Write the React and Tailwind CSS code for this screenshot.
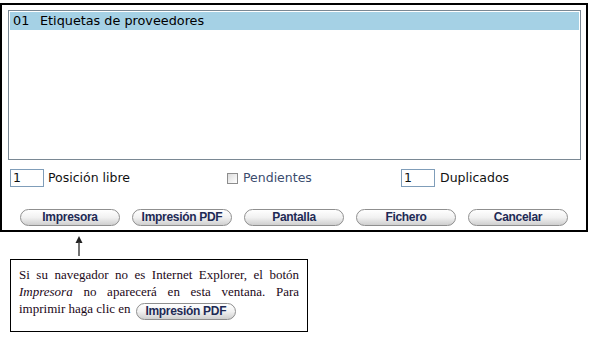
import React from "react";

const buttons = ["Impresora", "Impresión PDF", "Pantalla", "Fichero", "Cancelar"];

function PillButton({ label, className = "" }) {
  return (
    <button
      className={
        "h-[17px] w-[100px] rounded-full border border-[#8f8f8f] bg-gradient-to-b from-white via-[#f1f1f1] to-[#cfcfcf] text-[12px] font-bold leading-[15px] tracking-tight text-[#1e2a55] " +
        className
      }
      style={{ fontFamily: '"Liberation Sans", Arial, sans-serif' }}
    >
      {label}
    </button>
  );
}

export default function App() {
  return (
    <div className="h-[342px] w-[594px] bg-white" style={{ fontFamily: '"DejaVu Sans", Verdana, sans-serif' }}>
      {/* main panel */}
      <div className="ml-0 mt-[3px] h-[229px] w-[588px] border-2 border-black pl-[6px] pr-[5px] pt-[5px]">
        {/* list */}
        <div className="h-[150px] w-[573px] border border-[#7a8894] p-px">
          <div className="flex h-[18px] items-center bg-[#a5d1e5] pl-[3px] text-[12.8px] text-black">
            <span className="w-[27px]">01</span>
            <span>Etiquetas de proveedores</span>
          </div>
        </div>

        {/* options row */}
        <div className="mt-[9px] flex h-[18px] items-center pl-[2px] text-[12.5px] text-[#111]">
          <div className="flex w-[217px] items-center">
            <input
              readOnly
              value="1"
              className="h-[18px] w-[34px] border border-[#7f9db9] px-[2px] text-[12.5px] outline-none"
            />
            <span className="ml-[4px]">Posición libre</span>
          </div>
          <div className="flex w-[174px] items-center">
            <span className="h-[11px] w-[11px] border border-[#8d8d8d] bg-gradient-to-br from-[#dcdcdc] to-white"></span>
            <span className="ml-[5px] text-[#3a4c6e]">Pendientes</span>
          </div>
          <div className="flex items-center">
            <input
              readOnly
              value="1"
              className="h-[18px] w-[34px] border border-[#7f9db9] px-[2px] text-[12.5px] outline-none"
            />
            <span className="ml-[5px]">Duplicados</span>
          </div>
        </div>

        {/* buttons */}
        <div className="mt-[22px] flex gap-[12px] pl-[12px]">
          {buttons.map((b) => (
            <PillButton key={b} label={b} />
          ))}
        </div>
      </div>

      {/* arrow */}
      <div className="ml-[74px] h-[27px] w-[10px]">
        <svg width="10" height="27" viewBox="0 0 10 27">
          <polygon points="5,4 1.5,11 8.5,11" fill="#222" />
          <line x1="5" y1="10" x2="5" y2="24" stroke="#444" strokeWidth="1.5" />
        </svg>
      </div>

      {/* note */}
      <div
        className="ml-[10px] h-[73px] w-[298px] border border-black px-[8px] pt-[6px] text-justify text-[13px] leading-[17px] text-[#1c0818]"
        style={{ fontFamily: '"Liberation Serif", "Times New Roman", serif' }}
      >
        Si su navegador no es Internet Explorer, el botón <i>Impresora</i> no aparecerá en esta ventana. Para
        imprimir haga clic en{" "}
        <PillButton label="Impresión PDF" className="ml-[2px] mt-[3px] inline-block align-middle" />
      </div>
    </div>
  );
}
